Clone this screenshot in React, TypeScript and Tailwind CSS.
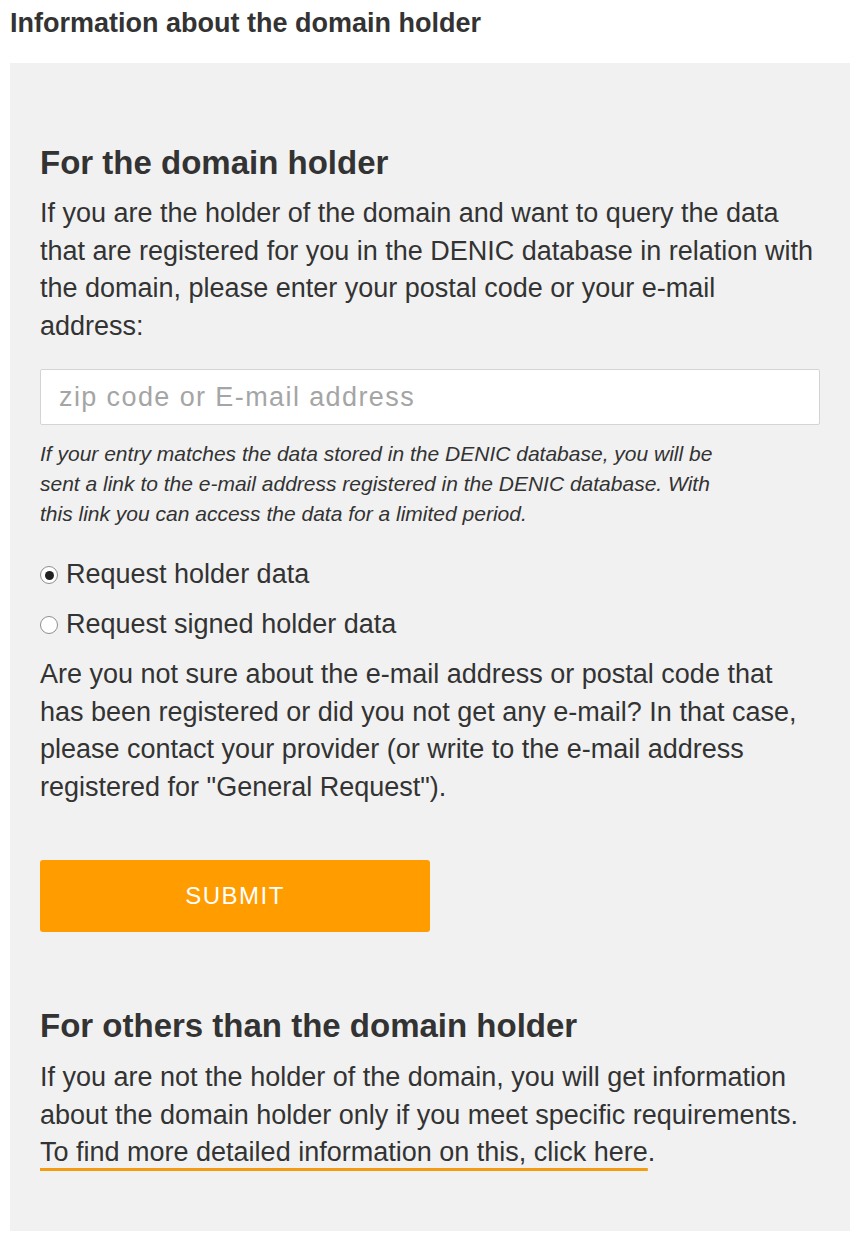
import React from "react";

const font = { fontFamily: '"Liberation Sans", Arial, sans-serif' };

function Radio({ checked, label }: { checked?: boolean; label: string }) {
  return (
    <label className="flex h-[50px] items-center gap-[8px]">
      <span className="flex h-[18px] w-[18px] items-center justify-center rounded-full border border-[#8f8f8f] bg-white">
        {checked && <span className="h-[9px] w-[9px] rounded-full bg-[#222]" />}
      </span>
      <span className="text-[27px] leading-[37.5px]">{label}</span>
    </label>
  );
}

export default function App() {
  return (
    <div className="min-h-[1243px] bg-white text-[#333]" style={font}>
      <h1 className="px-[10px] pt-[7px] text-[27px] font-bold leading-[32px] text-[#333]">
        Information about the domain holder
      </h1>

      <div className="mx-[10px] mt-[24px] bg-[#f1f1f1] px-[30px] pb-[59px] pt-[80px]">
        <h2 className="text-[33px] font-bold leading-[40px]">For the domain holder</h2>
        <p className="mt-[12px] text-[27px] leading-[37.5px]">
          If you are the holder of the domain and want to query the data that are registered
          for you in the DENIC database in relation with the domain, please enter your postal
          code or your e-mail address:
        </p>

        <input
          type="text"
          placeholder="zip code or E-mail address"
          className="mt-[24px] block h-[56px] w-full rounded-[2px] border border-[#d4d4d4] bg-white px-[18px] text-[27px] tracking-[1.4px] placeholder:text-[#a5a5a5] focus:outline-none"
        />

        <p className="mt-[14px] text-[21px] italic leading-[30px]">
          If your entry matches the data stored in the DENIC database, you will be
          <br />
          sent a link to the e-mail address registered in the DENIC database. With
          <br />
          this link you can access the data for a limited period.
        </p>

        <div className="mt-[21px]">
          <Radio checked label="Request holder data" />
          <Radio label="Request signed holder data" />
        </div>

        <p className="mt-[6px] text-[27px] leading-[37.5px]">
          Are you not sure about the e-mail address or postal code that has been registered or
          did you not get any e-mail? In that case, please contact your provider (or write to the
          e-mail address registered for "General Request").
        </p>

        <button className="mt-[54px] h-[72px] w-[390px] rounded-[3px] bg-[#ff9c00] text-[24px] tracking-[1.5px] text-white">
          SUBMIT
        </button>

        <h2 className="mt-[74px] text-[33px] font-bold leading-[40px]">
          For others than the domain holder
        </h2>
        <p className="mt-[13px] text-[27px] leading-[37.5px]">
          If you are not the holder of the domain, you will get information about the domain
          holder only if you meet specific requirements.{" "}
          <a
            href="#"
            className="underline decoration-[#f39c12] decoration-[3px] underline-offset-[7px]"
          >
            To find more detailed information on this, click here
          </a>
          .
        </p>
      </div>
    </div>
  );
}
